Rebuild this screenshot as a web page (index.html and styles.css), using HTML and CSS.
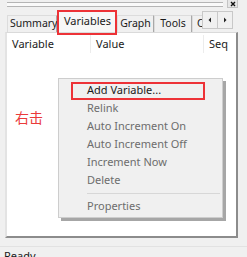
FILE: index.html
```html
<!DOCTYPE html>
<html lang="en">
<head>
    <meta charset="UTF-8">
    <title>Variables</title>
    <link rel="stylesheet" href="styles.css">
</head>
<body>
    <div class="topbar">
        <div class="slider"></div>
        <div class="close-btn">
            <svg width="8" height="6" viewBox="0 0 8 6"><path d="M2 1L6 5M6 1L2 5" stroke="#111" stroke-width="1.4"/></svg>
        </div>
    </div>

    <div class="tabs">
        <div class="tab tab-summary">Summary</div>
        <div class="tab active">Variables</div>
        <div class="tab tab-graph">Graph</div>
        <div class="tab tab-tools">Tools</div>
        <div class="tab cut">C</div>
        <div class="scroll-btns">
            <div class="scroll-btn">
                <svg width="6" height="6" viewBox="0 0 6 6"><path d="M4 0.5L1.5 3L4 5.5Z" fill="#222"/></svg>
            </div>
            <div class="scroll-btn">
                <svg width="6" height="6" viewBox="0 0 6 6"><path d="M2 0.5L4.5 3L2 5.5Z" fill="#222"/></svg>
            </div>
        </div>
    </div>

    <div class="panel">
        <div class="list-header">
            <div class="col col-name">Variable</div>
            <div class="col col-value">Value</div>
            <div class="col col-seq">Seq</div>
        </div>
        <div class="note">右击</div>

        <div class="context-menu">
            <div class="menu-item enabled marked">Add Variable...</div>
            <div class="menu-item">Relink</div>
            <div class="menu-item">Auto Increment On</div>
            <div class="menu-item">Auto Increment Off</div>
            <div class="menu-item">Increment Now</div>
            <div class="menu-item">Delete</div>
            <div class="menu-sep"></div>
            <div class="menu-item">Properties</div>
        </div>
    </div>

    <div class="statusbar">Ready</div>
</body>
</html>
```

FILE: styles.css
```css
body {
    margin: 0;
    width: 247px;
    height: 257px;
    overflow: hidden;
    background-color: #f0f0f0;
    color: #1a1a1a;
    font-family: "Noto Sans", "Liberation Sans", sans-serif;
    font-size: 11px;
}
.topbar {
    display: flex;
    align-items: flex-start;
    height: 8px;
    padding-left: 7px;
}
.slider {
    width: 216px;
    height: 3px;
    margin-top: 2px;
    border-top: 1px solid #b5b5b5;
    border-bottom: 1px solid #b5b5b5;
    background-color: #fafafa;
}
.close-btn {
    display: flex;
    align-items: center;
    justify-content: center;
    width: 9px;
    height: 7px;
    margin-left: 4px;
    background-color: #e6e6e6;
    border: 1px solid #c4c4c4;
    border-top: none;
}
.tabs {
    display: flex;
    align-items: flex-end;
    height: 23px;
    padding-left: 7px;
    margin-top: 1px;
    font-size: 10.5px;
}
.tab {
    box-sizing: border-box;
    height: 17px;
    line-height: 15px;
    text-align: center;
    white-space: nowrap;
    border-left: 1px solid #dcdcdc;
    border-top: 1px solid #dcdcdc;
    border-right: 1px solid #a9a9a9;
}
.tab-summary {
    width: 50px;
    padding-left: 2px;
}
.tab-graph {
    width: 37px;
}
.tab-tools {
    width: 38px;
}
.tab.active {
    position: relative;
    width: 60px;
    height: 21px;
    line-height: 17px;
    padding-left: 2px;
    font-size: 11px;
    background-color: #f7f7f7;
    border-right: 2px solid #8e8e8e;
    z-index: 1;
}
.tab.active::after {
    content: "";
    position: absolute;
    left: -1px;
    top: -2px;
    right: -2px;
    bottom: -3px;
    border: 2px solid #ed3237;
}
.tab.cut {
    width: 11px;
    padding-left: 4px;
    text-align: left;
    overflow: hidden;
    border-right: none;
}
.scroll-btns {
    display: flex;
    align-self: flex-start;
    margin-top: 2px;
}
.scroll-btn {
    display: flex;
    align-items: center;
    justify-content: center;
    width: 14px;
    height: 16px;
    background-color: #f0f0f0;
    border: 1px solid #c8c8c8;
    margin-left: -1px;
}
.panel {
    position: relative;
    height: 203px;
    margin: 0 9px 0 5px;
    background-color: white;
    border-left: 2px solid #e3e3e3;
    border-top: 1px solid #dadada;
    border-right: 2px solid #8c8c8c;
    border-bottom: 2px solid #8c8c8c;
}
.list-header {
    display: flex;
    height: 18px;
    line-height: 18px;
    margin-top: 2px;
}
.col {
    padding-left: 5px;
    border-right: 1px solid #ececec;
}
.col-name {
    width: 78px;
}
.col-value {
    width: 107px;
}
.col-seq {
    flex: 1;
    border-right: none;
}
.note {
    position: absolute;
    left: 8px;
    top: 76px;
    font-size: 14px;
    line-height: 16px;
    color: #ea3b3b;
    font-family: "Noto Sans CJK SC", sans-serif;
}
.context-menu {
    position: absolute;
    left: 51px;
    top: 45px;
    width: 163px;
    padding: 2px 0;
    background-color: #f0f0f0;
    border: 1px solid #cdcdcd;
    box-shadow: 3px 3px 0 #a6a6a6;
}
.menu-item {
    position: relative;
    height: 18px;
    line-height: 18px;
    padding-left: 28px;
    color: #6d6d6d;
}
.menu-item.enabled {
    color: #1a1a1a;
}
.menu-item.marked::after {
    content: "";
    position: absolute;
    left: 12px;
    top: 1px;
    width: 130px;
    height: 14px;
    border: 2px solid #ed3237;
}
.menu-sep {
    height: 1px;
    margin: 4px 2px 3px 28px;
    background-color: #d7d7d7;
}
.statusbar {
    margin-top: 8px;
    padding: 2px 0 0 4px;
    border-top: 1px solid #e2e2e2;
    line-height: 14px;
}
```
